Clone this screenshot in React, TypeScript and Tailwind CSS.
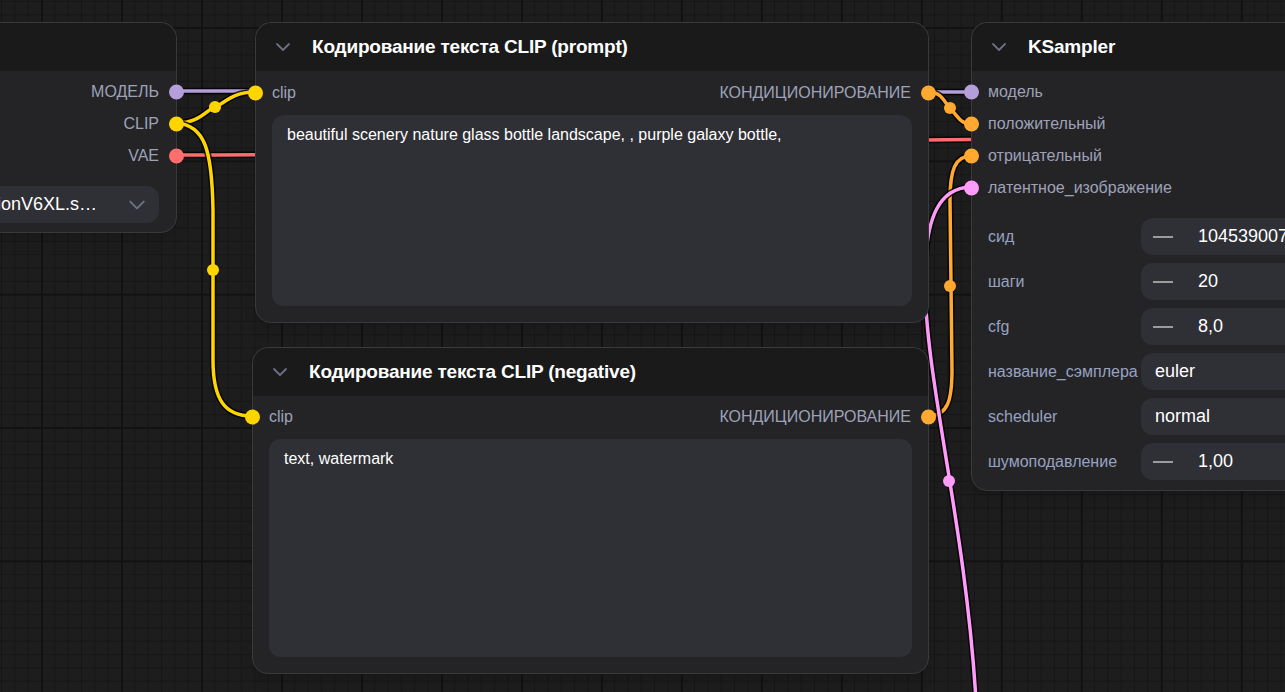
import React from 'react';

type SlotProps = { label: string; color: string; side: 'in' | 'out' };

const Chevron: React.FC<{ className?: string }> = ({ className }) => (
  <svg className={className} width="16" height="16" viewBox="0 0 16 16" fill="none">
    <polyline points="2,5 8,11 14,5" stroke="#6c6f86" strokeWidth="1.8" strokeLinecap="round" strokeLinejoin="round" />
  </svg>
);

// one input/output row, the dot sits on the node border
const Slot: React.FC<SlotProps> = ({ label, color, side }) => (
  <div className={`relative h-8 flex items-center ${side === 'out' ? 'justify-end pr-[17px]' : 'pl-[16px]'}`}>
    <span className="text-[16px] text-[#9ea2b8] whitespace-nowrap">{label}</span>
    <span
      className={`absolute top-1/2 -translate-y-1/2 w-[15px] h-[15px] rounded-full ${side === 'out' ? '-right-[8px]' : '-left-[8px]'}`}
      style={{ backgroundColor: color }}
    />
  </div>
);

const Header: React.FC<{ title?: string }> = ({ title }) => (
  <div className="h-12 shrink-0 flex items-center gap-[21px] pl-[19px] bg-[#1a1a1a] rounded-t-2xl">
    <Chevron />
    {title && <span className="text-[19px] font-bold text-white tracking-[-0.2px]">{title}</span>}
  </div>
);

const Wire: React.FC<{ d: string; color: string }> = ({ d, color }) => (
  <g>
    <path d={d} stroke="#000" strokeOpacity="0.8" strokeWidth="6.5" fill="none" />
    <path d={d} stroke={color} strokeWidth="3.5" fill="none" />
  </g>
);

const Minus = () => <span className="w-[20px] h-[2px] bg-[#9b9b9b] shrink-0" />;

const NumberWidget: React.FC<{ label: string; value: string }> = ({ label, value }) => (
  <div className="h-[37px] flex items-center">
    <span className="w-[169px] pl-[16px] text-[16px] text-[#98a2c0] whitespace-nowrap">{label}</span>
    <div className="flex-1 h-full rounded-xl bg-[#2f3035] flex items-center pl-[12px] gap-[25px]">
      <Minus />
      <span className="text-[18px] text-white">{value}</span>
    </div>
  </div>
);

const ComboWidget: React.FC<{ label: string; value: string }> = ({ label, value }) => (
  <div className="h-[37px] flex items-center">
    <span className="w-[169px] pl-[16px] text-[16px] text-[#98a2c0] whitespace-nowrap">{label}</span>
    <div className="flex-1 h-full rounded-xl bg-[#2f3035] flex items-center pl-[14px]">
      <span className="text-[18px] text-white">{value}</span>
    </div>
  </div>
);

const App: React.FC = () => {
  return (
    <div className="relative w-[1285px] h-[692px] overflow-hidden font-['Liberation_Sans',Arial,sans-serif] bg-[#1d1d1d] bg-[linear-gradient(90deg,#121212_2px,transparent_2px),linear-gradient(#121212_2px,transparent_2px),linear-gradient(90deg,#161616_1px,transparent_1px),linear-gradient(#161616_1px,transparent_1px)] bg-[size:80px_100%,100%_133.33px,13.333px_13.333px,13.333px_13.333px] bg-[position:41px_0,0_27px,1px_1px,1px_1px]">
      {/* links, drawn under the nodes */}
      <svg className="absolute inset-0" width="1285" height="692">
        <Wire d="M176 91 L971 92" color="#b49fdb" />
        <Wire d="M176 155 C560 155 600 138 1300 138" color="#ff6e6e" />
        <Wire d="M176 123 C200 123 206 110 215 107 C224 104 232 92 255 92" color="#ffd500" />
        <Wire d="M176 123 C205 125 212 150 213 210 L213 360 C213 400 225 416 252 416" color="#ffd500" />
        <Wire d="M928 92 C942 92 944 102 950 108 C956 114 960 124 971 124" color="#ffa931" />
        <Wire d="M928 416 C948 416 952 400 952 370 L950 200 C950 170 955 156 971 156" color="#ffa931" />
        <Wire d="M971 187 C940 188 925 215 925 280 C925 380 965 520 976 700" color="#ff9cf9" />
        <circle cx="215" cy="107" r="6" fill="#ffd500" />
        <circle cx="213" cy="270" r="6" fill="#ffd500" />
        <circle cx="950" cy="108" r="6" fill="#ffa931" />
        <circle cx="950" cy="286" r="6" fill="#ffa931" />
        <circle cx="949" cy="481" r="6" fill="#ff9cf9" />
      </svg>

      {/* checkpoint loader, mostly off screen */}
      <div className="absolute left-[-150px] top-[22px] w-[327px] h-[211px] flex flex-col rounded-2xl border border-[#3a3a3e] bg-[#242427] shadow-lg">
        <Header />
        <div className="flex flex-col pt-[5px]">
          <Slot label="МОДЕЛЬ" color="#b49fdb" side="out" />
          <Slot label="CLIP" color="#ffd500" side="out" />
          <Slot label="VAE" color="#ff6e6e" side="out" />
        </div>
        <div className="mt-[14px] mr-[17px] h-[37px] rounded-xl bg-[#2f3035] flex items-center justify-end pr-[13px] gap-[31px] overflow-hidden">
          <span className="text-[18px] text-white whitespace-nowrap">juggernautXL_versionV6XL.s…</span>
          <Chevron className="w-[18px] h-[18px] shrink-0" />
        </div>
      </div>

      {/* positive prompt */}
      <div className="absolute left-[255px] top-[22px] w-[674px] h-[301px] flex flex-col rounded-2xl border border-[#3a3a3e] bg-[#242427] shadow-lg">
        <Header title="Кодирование текста CLIP (prompt)" />
        <div className="relative pt-[6px]">
          <Slot label="clip" color="#ffd500" side="in" />
          <div className="absolute right-0 top-[6px] w-1/2">
            <Slot label="КОНДИЦИОНИРОВАНИЕ" color="#ffa931" side="out" />
          </div>
        </div>
        <div className="mx-[16px] mt-[6px] mb-[16px] flex-1 rounded-xl bg-[#2f3035] px-[15px] pt-[8px] text-[16px] text-white">
          beautiful scenery nature glass bottle landscape, , purple galaxy bottle,
        </div>
      </div>

      {/* negative prompt */}
      <div className="absolute left-[252px] top-[347px] w-[677px] h-[327px] flex flex-col rounded-2xl border border-[#3a3a3e] bg-[#242427] shadow-lg">
        <Header title="Кодирование текста CLIP (negative)" />
        <div className="relative pt-[5px]">
          <Slot label="clip" color="#ffd500" side="in" />
          <div className="absolute right-0 top-[5px] w-1/2">
            <Slot label="КОНДИЦИОНИРОВАНИЕ" color="#ffa931" side="out" />
          </div>
        </div>
        <div className="mx-[16px] mt-[6px] mb-[16px] flex-1 rounded-xl bg-[#2f3035] px-[15px] pt-[8px] text-[16px] text-white">
          text, watermark
        </div>
      </div>

      {/* sampler */}
      <div className="absolute left-[971px] top-[22px] w-[340px] h-[469px] flex flex-col rounded-2xl border border-[#3a3a3e] bg-[#242427] shadow-lg">
        <Header title="KSampler" />
        <div className="flex flex-col pt-[5px]">
          <Slot label="модель" color="#b49fdb" side="in" />
          <Slot label="положительный" color="#ffa931" side="in" />
          <Slot label="отрицательный" color="#ffa931" side="in" />
          <Slot label="латентное_изображение" color="#ff9cf9" side="in" />
        </div>
        <div className="mt-[14px] flex flex-col gap-[8px]">
          <NumberWidget label="сид" value="1045390072" />
          <NumberWidget label="шаги" value="20" />
          <NumberWidget label="cfg" value="8,0" />
          <ComboWidget label="название_сэмплера" value="euler" />
          <ComboWidget label="scheduler" value="normal" />
          <NumberWidget label="шумоподавление" value="1,00" />
        </div>
      </div>
    </div>
  );
};

export default App;
